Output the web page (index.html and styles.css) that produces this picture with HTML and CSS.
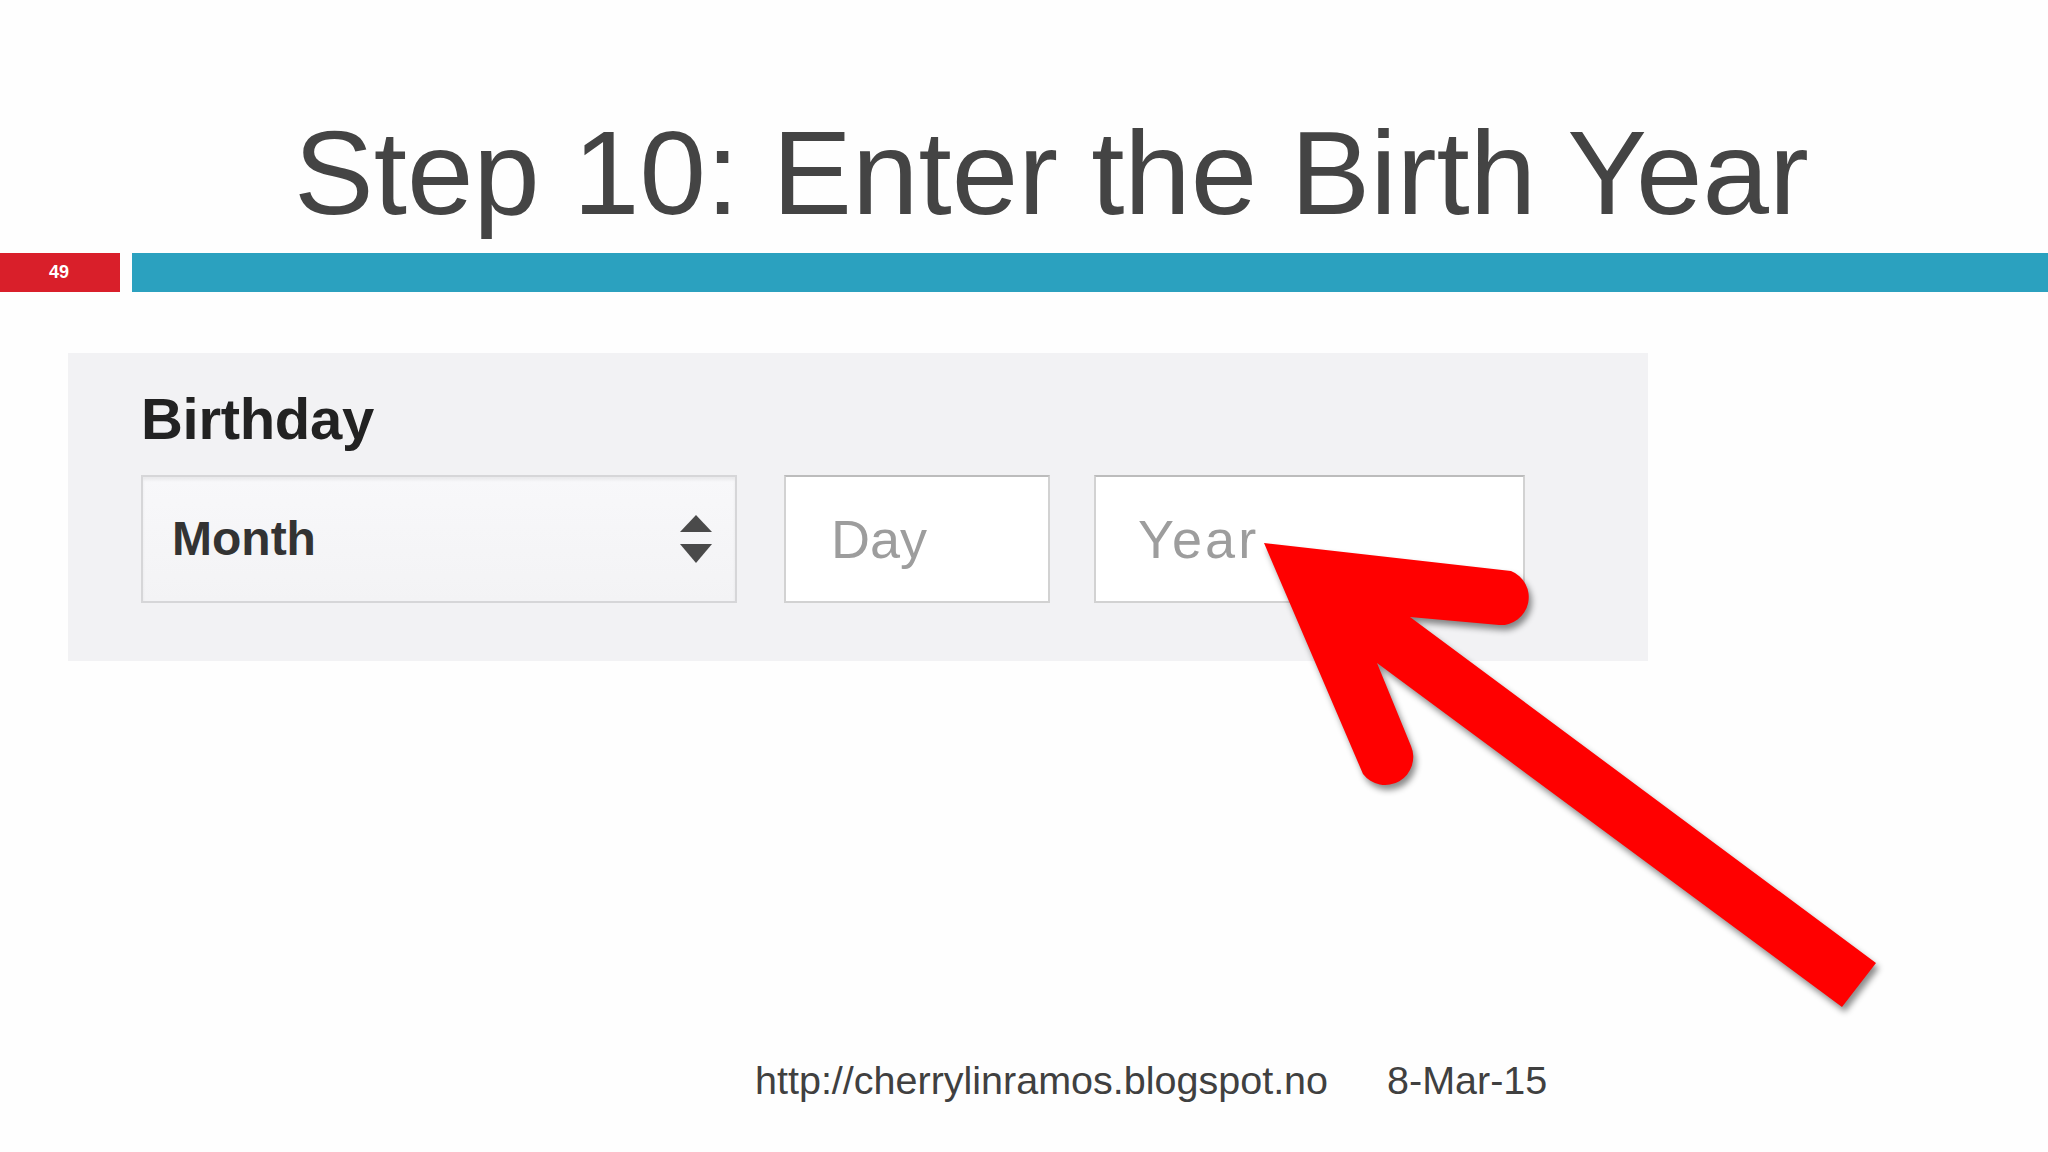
FILE: index.html
```html
<!DOCTYPE html>
<html>
<head>
<meta charset="utf-8">
<link rel="stylesheet" href="styles.css">
</head>
<body>
<div class="slide">
  <h1 class="title">Step 10: Enter the Birth Year</h1>
  <div class="bars">
    <div class="num">49</div>
    <div class="rule"></div>
  </div>
  <div class="panel">
    <div class="label">Birthday</div>
    <div class="fields">
      <div class="select">
        <span class="month">Month</span>
        <svg class="updown" width="34" height="52" viewBox="0 0 34 52">
          <path d="M17 2 L33 19 L1 19 Z" fill="#4a4a4a"/>
          <path d="M1 31 L33 31 L17 50 Z" fill="#4a4a4a"/>
        </svg>
      </div>
      <div class="input day">Day</div>
      <div class="input year">Year</div>
    </div>
  </div>
  <div class="footer">
    <span class="url">http://cherrylinramos.blogspot.no</span>
    <span class="date">8-Mar-15</span>
  </div>
  <svg class="arrow" width="2048" height="1152" viewBox="0 0 2048 1152">
    <path d="M1264 543 L1511 571 A28 28 0 0 1 1499 625 L1410 617 L1876 963 L1842 1007 L1377 663 L1411 746 A28 28 0 0 1 1363 774 Z" fill="#ff0000"/>
  </svg>
</div>
</body>
</html>
```
FILE: styles.css
```css
* { box-sizing: border-box; }
html, body { margin: 0; padding: 0; }
body {
  width: 2048px;
  height: 1152px;
  background: #fefefe;
  font-family: "Liberation Sans", Arial, sans-serif;
  overflow: hidden;
}
.slide {
  position: relative;
  width: 2048px;
  height: 1152px;
  display: flex;
  flex-direction: column;
}
.title {
  margin: 0;
  padding: 113px 0 0 294px;
  height: 232px;
  font-size: 119.5px;
  line-height: 119.5px;
  font-weight: normal;
  color: #444444;
  white-space: nowrap;
}
.bars {
  margin-top: 21px;
  height: 39px;
  display: flex;
  gap: 12px;
}
.num {
  width: 120px;
  background: #d91f2a;
  color: #ffffff;
  font-weight: bold;
  font-size: 18px;
  display: flex;
  align-items: center;
  justify-content: center;
  padding-right: 2px;
}
.rule {
  flex: 1;
  background: #2ba1bf;
}
.panel {
  margin: 61px 0 0 68px;
  width: 1580px;
  height: 308px;
  background: #f2f2f4;
  padding: 37px 0 0 73px;
}
.label {
  font-size: 58px;
  line-height: 58px;
  font-weight: bold;
  color: #222222;
  letter-spacing: -0.3px;
}
.fields {
  margin-top: 27px;
  display: flex;
  height: 128px;
}
.select {
  width: 596px;
  height: 128px;
  border: 2px solid #d6d6d8;
  background: linear-gradient(#f8f8fa, #f3f3f5);
  box-shadow: inset 0 3px 3px rgba(0,0,0,0.06);
  display: flex;
  align-items: center;
  padding: 0 22px 0 29px;
}
.month {
  font-size: 48px;
  line-height: 48px;
  font-weight: bold;
  color: #333333;
}
.updown {
  margin-left: auto;
}
.input {
  height: 128px;
  background: #ffffff;
  border: 2px solid #d2d2d2;
  border-top-color: #bcbcbc;
  display: flex;
  align-items: center;
  font-size: 54px;
  line-height: 54px;
  color: #9d9d9d;
}
.day {
  width: 266px;
  margin-left: 47px;
  padding-left: 45px;
}
.year {
  width: 431px;
  margin-left: 44px;
  padding-left: 42px;
  letter-spacing: 3px;
}
.footer {
  margin-top: 399px;
  padding-left: 755px;
  display: flex;
  gap: 59px;
  font-size: 39.5px;
  line-height: 40px;
  color: #404040;
}
.arrow {
  position: absolute;
  left: 0;
  top: 0;
  filter: drop-shadow(3px 5px 3px rgba(0,0,0,0.45));
}
```
